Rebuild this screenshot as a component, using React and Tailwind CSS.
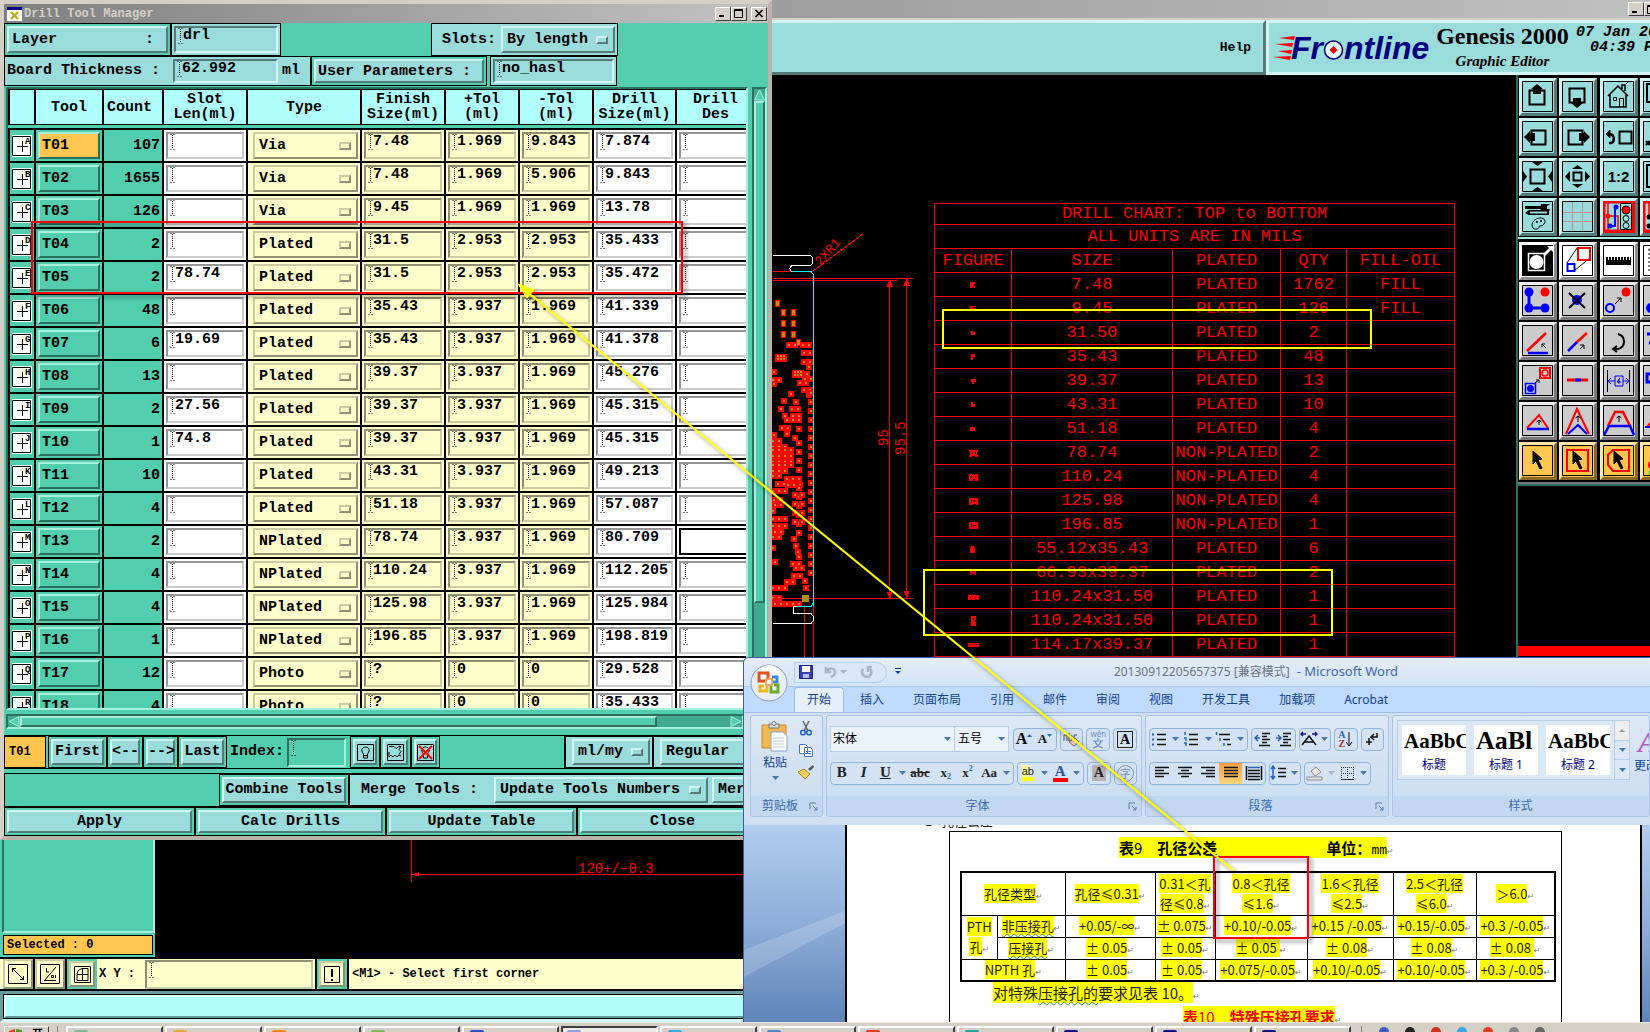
import React from 'react';

const MONO = "font-['Liberation_Mono',monospace] font-bold";
const SANS = "font-['Noto_Sans','Noto_Sans_CJK_SC',sans-serif]";

const greenUp = 'border-2 border-t-[#a8f0de] border-l-[#a8f0de] border-b-[#2d7060] border-r-[#2d7060]';
const greenDown = 'border-2 border-t-[#2d7060] border-l-[#2d7060] border-b-[#a8f0de] border-r-[#a8f0de]';
const aquaUp = 'border-2 border-t-[#d3f4f4] border-l-[#d3f4f4] border-b-[#557a7a] border-r-[#557a7a] bg-[#9adbdb]';
const aquaDown = 'border-2 border-t-[#557a7a] border-l-[#557a7a] border-b-[#d3f4f4] border-r-[#d3f4f4]';
const creamUp = 'border-2 border-t-[#ccccA2] border-l-[#ccccA2] border-b-[#8f8f72] border-r-[#8f8f72] bg-[#ffffcb]';
const creamDown = 'border-2 border-t-[#8f8f72] border-l-[#8f8f72] border-b-[#ccccA2] border-r-[#ccccA2] bg-[#ffffcb]';
const whiteDown = 'border-2 border-t-[#969696] border-l-[#969696] border-b-[#cbcbcb] border-r-[#cbcbcb] bg-white';

const tools = [
  ['T01', 107, '', 'Via', '7.48', '1.969', '9.843', '7.874'],
  ['T02', 1655, '', 'Via', '7.48', '1.969', '5.906', '9.843'],
  ['T03', 126, '', 'Via', '9.45', '1.969', '1.969', '13.78'],
  ['T04', 2, '', 'Plated', '31.5', '2.953', '2.953', '35.433'],
  ['T05', 2, '78.74', 'Plated', '31.5', '2.953', '2.953', '35.472'],
  ['T06', 48, '', 'Plated', '35.43', '3.937', '1.969', '41.339'],
  ['T07', 6, '19.69', 'Plated', '35.43', '3.937', '1.969', '41.378'],
  ['T08', 13, '', 'Plated', '39.37', '3.937', '1.969', '45.276'],
  ['T09', 2, '27.56', 'Plated', '39.37', '3.937', '1.969', '45.315'],
  ['T10', 1, '74.8', 'Plated', '39.37', '3.937', '1.969', '45.315'],
  ['T11', 10, '', 'Plated', '43.31', '3.937', '1.969', '49.213'],
  ['T12', 4, '', 'Plated', '51.18', '3.937', '1.969', '57.087'],
  ['T13', 2, '', 'NPlated', '78.74', '3.937', '1.969', '80.709'],
  ['T14', 4, '', 'NPlated', '110.24', '3.937', '1.969', '112.205'],
  ['T15', 4, '', 'NPlated', '125.98', '3.937', '1.969', '125.984'],
  ['T16', 1, '', 'NPlated', '196.85', '3.937', '1.969', '198.819'],
  ['T17', 12, '', 'Photo', '?', '0', '0', '29.528'],
  ['T18', 4, '', 'Photo', '?', '0', '0', '35.433'],
];

const chart = [
  ['7.48', 'PLATED', '1762', 'FILL'],
  ['9.45', 'PLATED', '126', 'FILL'],
  ['31.50', 'PLATED', '2', ''],
  ['35.43', 'PLATED', '48', ''],
  ['39.37', 'PLATED', '13', ''],
  ['43.31', 'PLATED', '10', ''],
  ['51.18', 'PLATED', '4', ''],
  ['78.74', 'NON-PLATED', '2', ''],
  ['110.24', 'NON-PLATED', '4', ''],
  ['125.98', 'NON-PLATED', '4', ''],
  ['196.85', 'NON-PLATED', '1', ''],
  ['55.12x35.43', 'PLATED', '6', ''],
  ['66.93x39.37', 'PLATED', '2', ''],
  ['110.24x31.50', 'PLATED', '1', ''],
  ['110.24x31.50', 'PLATED', '1', ''],
  ['114.17x39.37', 'PLATED', '1', ''],
];

// one small mark per chart row
const marks = [
  'M0 0h5v2h-1v2h1v2h-2v-1h-1v1h-2z',
  'M0 0h6v1h-3v1h3v2h-2v-1h-4z',
  'M1 1h2v1h2v3h-4z',
  'M1 0h4v3h-2v3h-2z',
  'M1 1h5v3h-2v2h-2v-2h-1z',
  'M1 0h2v2h2v3h-4z',
  'M0 1h5v4h-5z',
  'M-1 0h9v2h-1v3h1v2h-3v-1h-3v1h-3v-2h1v-3h-1zM2 2v2h1v-2zM5 2v2h1v-2z',
  'M-1 0h3v1h1v-1h1v1h1v-1h3v7h-3v-2h-2v2h-4zM1 2v2h1v-2zM5 2v2h1v-2z',
  'M-1 0h9v7h-2v-1h-3v1h-4zM1 2v3h1v-3zM4 2v2h1v-2z',
  'M-1 0h9v7h-9zM1 1v4h1v-4zM3 3v1h3v-1z',
  'M1 0h3v1h1v6h-5v-6h1z',
  'M0 1h6v4h-2v-1h-2v1h-2z',
  'M-2 1h11v5h-2v-1h-2v1h-3v-1h-1v1h-3zM0 3v1h1v-1zM5 3v1h1v-1z',
  'M1-2h5v4h-1v2h1v4h-5zM3 0v2h1v-2z',
  'M-2 1h11v4h-11zM0 2v1h1v-1zM3 2v1h1v-1zM6 2v1h1v-1z',
];

function Caret() {
  return (
    <svg width="5" height="16" className="ml-[2px] shrink-0" aria-hidden="true">
      <path d="M0.5 .5h1M3.5 .5h1M.5 15.5h1M3.5 15.5h1" stroke="#000" />
      <path d="M2.5 1v14" stroke="#000" strokeDasharray="1 1" />
    </svg>
  );
}

function Field({ label, value = '', look, className = '' }) {
  return (
    <div className={`flex min-w-0 items-start ${look} ${className}`}>
      <Caret />
      <input
        aria-label={label}
        defaultValue={value}
        className="h-4 w-full min-w-0 bg-transparent leading-4 outline-none"
      />
    </div>
  );
}

function Pick({ label, options, look, tone, className = '' }) {
  return (
    <div className={`flex min-w-0 items-center ${look} ${className}`}>
      <select aria-label={label} className="min-w-0 flex-1 appearance-none bg-transparent pl-1 outline-none">
        {options.map((o) => <option key={o}>{o}</option>)}
      </select>
      <span className={`mr-[5px] h-2 w-3 shrink-0 border-2 ${tone}`} />
    </div>
  );
}

const aquaKnob = 'border-t-[#d3f4f4] border-l-[#d3f4f4] border-b-[#557a7a] border-r-[#557a7a]';
const creamKnob = 'border-t-[#ccccA2] border-l-[#ccccA2] border-b-[#8f8f72] border-r-[#8f8f72]';

function WinButton({ kind }) {
  return (
    <button aria-label={kind} className="flex h-[14px] w-4 items-center justify-center border border-t-white border-l-white border-b-[#404040] border-r-[#404040] bg-[#d4d0c8]">
      <svg width="10" height="9" fill="none" stroke="#000">
        {kind === 'minimize' && <path d="M1 7h5" strokeWidth="2" />}
        {kind === 'maximize' && <path d="M.5 .5h8v8h-8zM.5 1.5h8" />}
        {kind === 'close' && <path d="M1.5 1l7 7M8.5 1l-7 7" strokeWidth="1.6" />}
      </svg>
    </button>
  );
}

/* ---------- Drill Tool Manager ---------- */

function ToolTable() {
  const th = 'border-y border-l-2 border-black bg-[#b0ffff] p-0 font-bold leading-[15px]';
  const td = 'h-[33px] border-t-2 border-l-2 border-black p-[2px]';
  return (
    <table className="w-full table-fixed border-separate border-spacing-0">
      <colgroup>
        <col className="w-[26px]" />
        <col className="w-[68px]" />
        <col className="w-[60px]" />
        <col className="w-[84px]" />
        <col className="w-[114px]" />
        <col className="w-[84px]" />
        <col className="w-[74px]" />
        <col className="w-[74px]" />
        <col className="w-[83px]" />
        <col />
      </colgroup>
      <thead>
        <tr className="h-9">
          <th className={th} aria-label="Shape" />
          <th className={th}>Tool</th>
          <th className={`${th} pl-[3px] text-left`}>Count</th>
          <th className={th}>Slot<br />Len(ml)</th>
          <th className={th}>Type</th>
          <th className={th}>Finish<br />Size(ml)</th>
          <th className={th}>+Tol<br />(ml)</th>
          <th className={th}>-Tol<br />(ml)</th>
          <th className={th}>Drill<br />Size(ml)</th>
          <th className={`${th} pl-2`}>Drill<br />Des</th>
        </tr>
      </thead>
      <tbody>
        <tr className="h-[3px]"><td colSpan={10} className="p-0" /></tr>
        {tools.map(([id, count, slot, type, size, plus, minus, drill], i) => (
          <tr key={id}>
            <td className={`${td} pr-0`}>
              <svg width="20" height="22" viewBox="0 0 20 22">
                <path d="M0 0h20v22H0z" fill="#fff" />
                <path d="M.5 1.500h18v19H.5zM5 11.500h11M10.500 6v11" fill="none" stroke="#000" />
                <text x="13" y="9" fontSize="9" fill="#000">{'ABCDEFGHIJKLMNOPQR'[i]}</text>
              </svg>
            </td>
            <td className={td}>
              <button className={`block h-[27px] w-full pl-[2px] text-left ${greenUp} ${i === 0 ? 'bg-[#ffc64f]' : 'bg-[#52cdae]'}`}>{id}</button>
            </td>
            <td className={`${td} text-right`}>{count}</td>
            <td className={`${td} bg-white`}><Field label={`${id} slot length`} value={slot} look={whiteDown} className="h-[27px]" /></td>
            <td className={`${td} bg-[#ffffcb] pl-[5px]`}>
              <Pick label={`${id} type`} options={[type]} look={creamUp} tone={creamKnob} className="h-[27px]" />
            </td>
            <td className={`${td} bg-[#ffffcb]`}><Field label={`${id} finish size`} value={size} look={creamDown} className="h-[27px]" /></td>
            <td className={`${td} bg-[#ffffcb]`}><Field label={`${id} plus tolerance`} value={plus} look={creamDown} className="h-[27px]" /></td>
            <td className={`${td} bg-[#ffffcb]`}><Field label={`${id} minus tolerance`} value={minus} look={creamDown} className="h-[27px]" /></td>
            <td className={`${td} bg-white`}><Field label={`${id} drill size`} value={drill} look={whiteDown} className="h-[27px]" /></td>
            <td className={`${td} bg-white pr-0`}>
              {id === 'T13' ? (
                <div className="h-[27px] border-2 border-r-0 border-black bg-white" />
              ) : (
                <Field label={`${id} designator`} look={whiteDown} className="h-[27px] border-r-0" />
              )}
            </td>
          </tr>
        ))}
      </tbody>
    </table>
  );
}

function DrillToolManager() {
  const box = 'border border-black p-[2px]';
  const btn = `h-full w-full ${aquaUp}`;
  return (
    <section className={`absolute left-0 top-0 flex w-[772px] flex-col border-4 border-t-[#d4d0c8] border-l-[#d4d0c8] border-r-[#b8b4ac] border-b-[#b8b4ac] bg-[#52cdae] text-[15px] leading-5 ${MONO}`}>
      <header className="flex h-[19px] items-center bg-linear-to-r from-[#808080] to-[#c3c3c3] pl-[3px] text-xs text-[#d4d0c8]">
        <svg width="15" height="14" className="mr-[2px]">
          <path d="M0 0h15v14H0z" fill="#fff" />
          <path d="M0 0h15v3H0z" fill="#000080" />
          <path d="M4 5l7 7M11 5l-7 7" stroke="#b9ae18" strokeWidth="2.4" />
        </svg>
        <h1 className="flex-1">Drill Tool Manager</h1>
        <WinButton kind="minimize" />
        <WinButton kind="maximize" />
        <span className="w-1" />
        <WinButton kind="close" />
        <span className="w-px" />
      </header>

      <div className="flex h-[33px]">
        <div className={`${box} w-[167px]`}>
          <button className={`${btn} flex items-center justify-between pl-[3px] pr-3`}><span>Layer</span><span>:</span></button>
        </div>
        <div className={`${box} w-[110px] bg-[#9adbdb]`}><Field label="Layer" value="drl" look={aquaDown} className="h-full" /></div>
        <div className={`${box} ml-[150px] flex w-[187px] items-center bg-[#9adbdb]`}>
          <span className="flex-1 pl-2">Slots:</span>
          <Pick label="Slots" options={['By length']} look={aquaUp} tone={aquaKnob} className="h-full w-[114px]" />
        </div>
      </div>
      <div className="flex h-[30px]">
        <div className={`${box} flex w-[307px] items-center bg-[#9adbdb]`}>
          <span className="w-[166px] shrink-0">Board Thickness :</span>
          <Field label="Board thickness" value="62.992" look={aquaDown} className="h-6 w-[105px]" />
          <span className="pl-1">ml</span>
        </div>
        <div className={`${box} w-[176px]`}><button className={`${btn} pl-[2px] text-left leading-none`}>User Parameters :</button></div>
        <div className={`${box} ml-[3px] w-[127px] bg-[#9adbdb]`}><Field label="User parameters" value="no_hasl" look={aquaDown} className="h-full" /></div>
      </div>

      <div className="mt-px flex h-[623px]">
        <div className={`ml-[2px] min-w-0 flex-1 overflow-hidden ${greenDown}`}><ToolTable /></div>
        <div className={`ml-1 mr-px flex w-[15px] flex-col bg-[#40a98f] ${greenDown}`}>
          <svg width="11" height="12"><path d="M5.5 1L10.500 11H.5z" fill="#52cdae" stroke="#a8f0de" /></svg>
          <div className={`h-[502px] bg-[#52cdae] ${greenUp}`} />
        </div>
      </div>
      <div className="flex h-[22px] pt-1 pl-[2px] pr-6">
        <div className={`flex h-[15px] w-full bg-[#40a98f] ${greenDown}`}>
          <svg width="12" height="11"><path d="M1 5.500L11 .5v10z" fill="#52cdae" stroke="#a8f0de" /></svg>
          <div className={`h-full w-[637px] bg-[#52cdae] ${greenUp}`} />
          <span className="flex-1" />
          <svg width="12" height="11"><path d="M11 5.500L1 .5v10z" fill="#52cdae" stroke="#a8f0de" /></svg>
        </div>
      </div>

      <div className="mt-[3px] flex h-[34px] border-y border-black">
        <div className="mr-[2px] w-[42px] border border-black bg-[#ffc64f] pl-1 text-xs leading-[30px]">T01</div>
        <div className={`${box} w-[59px]`}><button className={btn}>First</button></div>
        <div className={`${box} w-9`}><button className={`${btn} whitespace-nowrap`}>&lt;--</button></div>
        <div className={`${box} w-[35px]`}><button className={`${btn} whitespace-nowrap`}>--&gt;</button></div>
        <div className={`${box} w-[49px]`}><button className={btn}>Last</button></div>
        <div className="flex w-[123px] items-center pl-[3px]">
          <label className="flex-1" htmlFor="tool-index">Index:</label>
          <div className={`mr-1 flex h-[29px] w-[59px] items-start ${greenDown}`}>
            <Caret />
            <input id="tool-index" className="h-4 w-full min-w-0 bg-transparent outline-none" />
          </div>
        </div>
        <div className={`${box} w-[30px]`}>
          <button aria-label="Highlight" className={`flex items-center justify-center ${btn}`}>
            <svg width="17" height="17" fill="none" stroke="#000" className="shrink-0"><path d="M.5 .5h16v16H.5z" /><path d="M6.500 10c-4-5 0-7 2-7s6 2 2 7v4h-4zM6.500 11.500h4" /></svg>
          </button>
        </div>
        <div className={`${box} w-[31px]`}>
          <button aria-label="Save" className={`flex items-center justify-center ${btn}`}>
            <svg width="17" height="17" fill="none" stroke="#000" className="shrink-0"><path d="M.5 .5h16v16H.5z" /><path d="M2 2.500h5l2 2 3-2h2l-2 3 2 2-2 3M2 8v5l2-2 2 2 2-2 2 2 2-2 2 1" /></svg>
          </button>
        </div>
        <div className={`${box} w-[29px]`}>
          <button aria-label="Clear" className={`flex items-center justify-center ${btn}`}>
            <svg width="17" height="17" fill="none" stroke="#000" className="shrink-0"><path d="M.5 .5h16v16H.5z" /><path d="M6.500 10c-4-5 0-7 2-7s6 2 2 7v4h-4z" /><path d="M2 2l13 13M15 2L2 15" stroke="#f00" strokeWidth="2" /></svg>
          </button>
        </div>
        <div className="flex-1 border-r border-black" />
        <div className={`${box} w-[88px] bg-[#9adbdb] pl-[6px]`}><Pick label="Units" options={['ml/my']} look={aquaUp} tone={aquaKnob} className="h-full" /></div>
        <div className={`${box} w-[115px] bg-[#9adbdb] pl-[6px]`}><Pick label="Mode" options={['Regular']} look={aquaUp} tone={aquaKnob} className="h-full" /></div>
      </div>

      <div className="mt-1 flex h-[34px] border-y border-black">
        <div className="w-[215px] border-l border-black" />
        <div className={`${box} w-[130px]`}><button className={`${btn} whitespace-nowrap`}>Combine Tools</button></div>
        <div className={`${box} flex min-w-0 flex-1 items-center bg-[#9adbdb] pr-0`}>
          <span className="w-[142px] shrink-0 pl-[9px]">Merge Tools :</span>
          <Pick label="Merge tools" options={['Update Tools Numbers']} look={aquaUp} tone={aquaKnob} className="h-full w-[214px] shrink-0" />
          <button className={`ml-1 h-full flex-1 overflow-hidden pl-1 text-left ${aquaUp}`}>Merge</button>
        </div>
      </div>
      <div className="grid h-[29px] grid-cols-4">
        {['Apply', 'Calc Drills', 'Update Table', 'Close'].map((t) => (
          <div key={t} className={box}><button className={`${btn} leading-none`}>{t}</button></div>
        ))}
      </div>
    </section>
  );
}

/* ---------- Graphic editor behind the dialogs ---------- */

const navIcons = [
  <g key="n"><path d="M7.500 9.500h15v14h-15z" fill="none" stroke="#000" strokeWidth="2" /><path d="M15 3l6 5h-2v5h-8V8H9z" /></g>,
  <g key="n"><path d="M7.500 7.500h15v14h-15z" fill="none" stroke="#000" strokeWidth="2" /><path d="M15 27l6-5h-2v-5h-8v5H9z" /></g>,
  <g key="n" fill="none" stroke="#000"><path d="M7 13v13h16V13M5 15L15 5l10 10M19 8V4h3v6" strokeWidth="1.500" /><path d="M10.500 16.500h3v3h-3zM16.500 26V17.500h4V26M23 3l2-2" /></g>,
  <path key="n" d="M4 3h24v18H4z" fill="none" stroke="#000" strokeWidth="2" />,
  <g key="n"><path d="M9.500 9.500h14v14h-14z" fill="none" stroke="#000" strokeWidth="2" /><path d="M2 16l6-6v2h5v8H8v2z" /></g>,
  <g key="n"><path d="M6.500 9.500h14v14h-14z" fill="none" stroke="#000" strokeWidth="2" /><path d="M28 16l-6-6v2h-5v8h5v2z" /></g>,
  <g key="n" fill="none" stroke="#000"><path d="M16.500 10.500h12v12h-12z" strokeWidth="2" /><path d="M6 22h2c4-1 4-9-2-9" strokeWidth="2.500" /><path d="M7 9l-4 4 4 4z" fill="#000" /></g>,
  <path key="n" d="M8 3v17h20M3 20l4 4M7 20l-4 4" fill="none" stroke="#000" strokeWidth="2" />,
  <g key="n"><path d="M8.500 8.500h14v14h-14z" fill="none" stroke="#000" strokeWidth="2" /><path d="M10 1h11l-5.500 4zM10 30h11l-5.500-4zM1 10v11l4-5.500zM30 10v11l-4-5.500z" /></g>,
  <g key="n"><path d="M11.500 11.500h8v8h-8z" fill="none" stroke="#000" strokeWidth="2" /><path d="M10 8h11l-5.500-4zM10 23h11l-5.500 4zM8 10v11l-5-5.500zM23 10v11l5-5.500z" /></g>,
  <text key="n" x="15.500" y="21" fontSize="15" textAnchor="middle" className="font-['Liberation_Sans',sans-serif] font-bold">1:2</text>,
  <path key="n" d="M4 4h24v22H4zM10 10h18" fill="none" stroke="#000" strokeWidth="2" />,
  <g key="n"><path d="M3 5h16v3H3zM19 3h9l-3 2v3h3l-1 2h-6l-3-2zM3 12l4-3h20v5H7z" /><path d="M8 11.500h17" stroke="#9adbdb" strokeWidth="2" /><path d="M11 27c-3-5 2-10 7-10s6 3 4 6-5 1-5 3-4 3-6 1z" fill="none" stroke="#000" /><circle cx="15" cy="21" r="1" /><circle cx="19" cy="20" r="1" /></g>,
  <path key="n" d="M10.500 1v29M20.500 1v29M1 11.500h29M1 20.500h29" fill="none" stroke="#c98c8c" />,
  <g key="n"><path d="M5 1v29M5 15h10v14" stroke="#f00" fill="none" strokeWidth="1.500" /><path d="M7 25h5V6" stroke="#00f" fill="none" strokeWidth="2" /><circle cx="5" cy="15" r="2.500" fill="#f00" /><circle cx="13" cy="6" r="2.500" fill="#00f" /><circle cx="7" cy="25" r="2.500" fill="#00f" /><path d="M17.500 2.500h11v26h-11z" fill="#9adbdb" stroke="#000" /><circle cx="23" cy="9" r="4" fill="#f00" stroke="#000" /><circle cx="23" cy="17.500" r="3" fill="none" stroke="#000" /><circle cx="23" cy="24.500" r="3" fill="none" stroke="#000" /></g>,
  <g key="n"><path d="M6 2v14l9-5" fill="none" stroke="#f00" strokeWidth="1.500" /><circle cx="6" cy="16" r="2.500" /><circle cx="6" cy="25" r="2.500" /></g>,
];

const editIcons = [
  <g key="e"><path d="M0 0h31v31H0z" /><path d="M6.500 8.500h16v17h-16z" fill="none" stroke="#fff" strokeWidth="1.500" /><circle cx="14.500" cy="17" r="7" fill="#fff" /><path d="M21 9l6-6-2-2h6v6l-2-2-6 6z" fill="#fff" /></g>,
  <g key="e" fill="none"><path d="M5 18L15 3M13 25l15-12" stroke="#000" /><path d="M16 3h12v12H16z" stroke="#f00" strokeWidth="2" /><path d="M5.500 19h7v7h-7z" stroke="#00f" strokeWidth="2" /></g>,
  <path key="e" d="M3 12h2v3h1v-3h2v3h1v-3h2v3h1v-3h2v3h1v-3h2v3h1v-3h2v3h1v-3h2v3h1v-3h2v3h1v-3h1v8H3z" />,
  <path key="e" d="M6 4h24M6 4v24" fill="none" stroke="#000" strokeDasharray="2 2" />,
  <g key="e"><path d="M7 7v16h17" fill="none" stroke="#00f" strokeWidth="3" /><circle cx="7" cy="7" r="4.500" fill="#00f" /><circle cx="7" cy="23" r="4.500" fill="#00f" /><circle cx="23" cy="23" r="4.500" fill="#00f" /><circle cx="23" cy="7" r="4.500" fill="#f00" /></g>,
  <g key="e"><circle cx="15" cy="15" r="5" fill="#00f" /><path d="M7 8l16 15M23 8L7 23" stroke="#000" strokeWidth="2" /></g>,
  <g key="e"><circle cx="7" cy="23" r="4" fill="none" stroke="#00f" strokeWidth="2" /><path d="M12 19l6-6M14 13h4v4" fill="none" stroke="#000" /><circle cx="23" cy="7" r="4.500" fill="#f00" /></g>,
  <circle key="e" cx="8" cy="23" r="5" fill="#00f" />,
  <g key="e" fill="none"><path d="M5 26L24 8" stroke="#f00" strokeWidth="2.500" /><path d="M6 28h20" stroke="#00f" strokeWidth="2.500" /><path d="M24 23l-4-4M20 22v-3h3" stroke="#000" /></g>,
  <g key="e" fill="none"><path d="M6 26L15 17" stroke="#00f" strokeWidth="2.500" /><path d="M15 17L25 8" stroke="#f00" strokeWidth="2.500" /><path d="M18 24l4-4M18 20h4v4" stroke="#000" /></g>,
  <path key="e" d="M15 9c8 2 8 13 0 15h-4M14 21l-4 3 4 3" fill="none" stroke="#000" strokeWidth="2" />,
  <path key="e" d="M4 9h24M6 18h24" fill="none" stroke="#00f" strokeWidth="3" />,
  <g key="e" fill="none"><path d="M18 3h10v10H18z" stroke="#f00" strokeWidth="2" /><circle cx="23" cy="8" r="3" stroke="#f00" strokeWidth="1.500" /><path d="M3.500 18.500h10v10h-10z" stroke="#00f" strokeWidth="1.500" /><circle cx="8.500" cy="23.500" r="3.500" fill="#00f" /><path d="M13 18l4-3M14 15h3v3" stroke="#000" /></g>,
  <g key="e"><path d="M5 15h21" stroke="#f00" strokeWidth="3" /><path d="M13 15h6" stroke="#00f" strokeWidth="3" /></g>,
  <g key="e" fill="none" stroke="#00f"><path d="M4.500 5v22M26.500 5v22" stroke="#000" /><path d="M12 11h8v10h-8zM5 16h7M20 16h6M8 13l-3 3 3 3M23 13l3 3-3 3M17 13l-3 4h4M16 14v5" /></g>,
  <path key="e" d="M4 9h10v8H4zM10 18v8h12" fill="none" stroke="#00f" strokeWidth="3" />,
  <g key="e" fill="none"><path d="M5 23L17 10l9 13" stroke="#f00" strokeWidth="2" /><path d="M5 24h22" stroke="#00f" strokeWidth="2.500" /><path d="M17 20v-5M14.500 17l2.500-2 2.500 2" stroke="#000" /></g>,
  <g key="e" fill="none"><path d="M4 29L15 4l12 25" stroke="#f00" strokeWidth="2" /><path d="M6 29l10-9 9 9" stroke="#00f" strokeWidth="2" /><path d="M16 17v-6M13.500 13l2.500-2 2.500 2" stroke="#000" /></g>,
  <g key="e" fill="none"><path d="M5 21l7-14h8l7 14" stroke="#f00" strokeWidth="2.500" /><path d="M1 30l5-9h21l4 9" stroke="#00f" strokeWidth="2.500" /><path d="M16 17v-6M13.500 13l2.500-2 2.500 2" stroke="#000" /></g>,
  <g key="e" fill="none"><path d="M4 22L18 6" stroke="#f00" strokeWidth="2" /><path d="M2 22h26" stroke="#00f" strokeWidth="2" /></g>,
];

const cursor = <path d="M11 6l9 8-4 1 4 8-2 1-4-8-3 3z" stroke="#000" />;
const selectIcons = [
  <g key="s">{cursor}</g>,
  <g key="s"><path d="M5 5h21v21H5z" fill="none" stroke="#f00" strokeWidth="2" />{cursor}</g>,
  <g key="s"><path d="M10 5h16v21H10l-5-6V10z" fill="none" stroke="#f00" strokeWidth="2" />{cursor}</g>,
  <g key="s"><circle cx="9" cy="20" r="4" fill="#f00" /><circle cx="9" cy="28" r="3" fill="#0c0" /><path d="M9 2v14" stroke="#000" /></g>,
];

function ToolButton({ icon, label, look, frame = '#000' }) {
  return (
    <button aria-label={label} className={`h-[38px] w-[38px] border-[3px] ${look}`}>
      <svg width="32" height="32" viewBox="0 0 32 32">
        <path d="M.5 .5h30v30H.5z" fill="none" stroke={frame} strokeWidth={frame === '#000' ? 1 : 4} />
        {icon}
      </svg>
    </button>
  );
}

function Palette() {
  const aqua = 'border-t-[#d3f4f4] border-l-[#d3f4f4] border-b-[#557a7a] border-r-[#557a7a] bg-[#9adbdb]';
  const white = 'border-t-white border-l-white border-b-[#8c8c8c] border-r-[#8c8c8c] bg-white';
  const grey = 'border-t-[#eeeeee] border-l-[#eeeeee] border-b-[#7a7a7a] border-r-[#7a7a7a] bg-[#cbcbcb]';
  const gold = 'border-t-[#ffe6ac] border-l-[#ffe6ac] border-b-[#8a6824] border-r-[#8a6824] bg-[#ffc64f]';
  return (
    <nav className="relative w-[134px] shrink-0 overflow-hidden border-l-2 border-[#2d7060] bg-black">
      <div className="grid w-40 grid-cols-4 gap-[2px] pt-[3px] pl-px">
        {navIcons.map((icon, i) => (
          <ToolButton key={i} icon={icon} label={`View ${i + 1}`} look={aqua} frame={i > 13 ? '#f00' : '#000'} />
        ))}
      </div>
      <div className="mt-px mb-[3px] h-[2px] bg-[#a8f0de]" />
      <div className="grid w-40 grid-cols-4 gap-[2px] pl-px">
        {editIcons.map((icon, i) => (
          <ToolButton key={i} icon={icon} label={`Edit ${i + 1}`} look={i < 4 ? white : grey} />
        ))}
        {selectIcons.map((icon, i) => (
          <ToolButton key={i} icon={icon} label={`Select ${i + 1}`} look={gold} />
        ))}
      </div>
      <div className="mt-[2px] h-[2px] bg-[#777777]" />
      <div className="h-[2px] bg-[#2d7060]" />
      <div className="mt-[160px] h-[10px] bg-[#f00]" />
    </nav>
  );
}

// pad rows of the board edge: [y, fromX, toX]
const padRows = [
  [346, 789, 797], [346, 803, 812], [352, 804, 810], [363, 804, 810], [368, 809, 811], [373, 807, 811],
  [379, 805, 811], [384, 800, 811], [389, 804, 810], [394, 809, 811], [372, 774, 777], [380, 773, 780], [385, 774, 777],
  [395, 791, 794], [402, 784, 788], [402, 796, 799], [408, 781, 783], [408, 792, 800], [415, 785, 788], [415, 793, 800],
  [421, 787, 800], [427, 782, 788], [433, 787, 790], [430, 799, 802], [436, 774, 776], [438, 795, 797],
  [441, 773, 783], [446, 773, 786], [451, 773, 792], [456, 773, 792], [461, 773, 792], [466, 773, 792],
  [471, 773, 790], [479, 787, 804], [486, 788, 804], [476, 773, 784], [484, 778, 784], [492, 773, 786], [499, 774, 780],
  [505, 775, 782], [512, 773, 778], [519, 773, 788], [525, 773, 786], [531, 775, 785], [537, 773, 780],
  [538, 794, 796], [545, 796, 800], [551, 798, 802], [557, 799, 802], [563, 793, 800], [569, 796, 802], [575, 794, 800],
  [581, 787, 794], [582, 805, 808], [587, 773, 786], [589, 806, 810], [598, 773, 784], [604, 775, 800],
  [561, 775, 777], [548, 773, 775],
];

function Board() {
  const pads = [];
  padRows.forEach(([y, from, to], r) => {
    for (let x = from; x <= to; x += 6) pads.push([x, y + ((x + r) % 3) - 1]);
  });
  for (let y = 393; y < 580; y += 9) pads.push([811, y]);
  for (let y = 443; y < 540; y += 9) pads.push([799, y]);
  for (let y = 495; y < 530; y += 9) pads.push([795, y], [802, y]);
  return (
    <svg className="absolute left-0 top-0 h-full w-full" shapeRendering="crispEdges">
      <g transform="translate(-155 -75)">
        {pads.map(([x, y], i) => (
          <g key={i}>
            <path d={`M${x - 3} ${y - 3}h6v6h-6z`} fill="#f00" />
            <path d={`M${x - 1} ${y - 1}h2v2h-2z`} fill="#c08a10" />
          </g>
        ))}
        {[[777, 303], [783, 312], [793, 312], [783, 323], [793, 323], [783, 334], [793, 334], [798, 342]].map(([x, y]) => (
          <path key={`${x}-${y}`} d={`M${x - 2} ${y - 3}h4v6h-4z`} fill="#c08a10" stroke="#f00" />
        ))}
        <path d="M775 354h11v7h-11zM792 370h11v7h-11z" fill="#f00" stroke="#f00" />
        <path d="M777 356h8M777 359h8M794 372h8M794 375h8" stroke="#c08a10" strokeWidth="2" strokeDasharray="2 1" />
        <path d="M773 271.500h25M773 278.500h140M773 280.500h124M773 598.500h140M804.500 605v52M813.500 605v52" stroke="#f00" fill="none" />
        <path d="M889.500 280v318M906.500 278v320M813 271l50-37" stroke="#f00" fill="none" />
        <path d="M887 286h5l-2-6zM904 285h5l-2-6zM887 592h5l-2 6zM904 591h5l-2 6z" fill="#f00" stroke="#f00" />
        <path d="M773 255.500h37q3 1 3 5t-3 5h-16q-4 0-4 3t3 3" stroke="#fff" fill="none" />
        <path d="M792 271.500h19l2.500 3v331M794 606.500h17l2-3" stroke="#0ff" fill="none" />
        <path d="M797 606.500h-4v7h18l2.500 3v4l-2.500 3h-38" stroke="#fff" fill="none" />
        <path d="M802 595h6v6h-6z" fill="#9a9a10" stroke="#c08a10" />
        <g fill="#f00" fontSize="14" className="font-['Liberation_Mono',monospace]">
          <text transform="translate(888 446) rotate(-90)">95</text>
          <text transform="translate(905 455) rotate(-90)">95.5</text>
          <text transform="translate(820 266) rotate(-48)" fontSize="13">2XR1</text>
          <text x="578" y="873">120+/-0.3</text>
        </g>
        <path d="M411.500 839v43M411 874.500h362" stroke="#f00" fill="none" />
        <path d="M411 875l8-3v4z" fill="#f00" />
      </g>
    </svg>
  );
}

function DrillChart() {
  const cell = 'h-6 border border-[#f00] p-0 font-normal';
  return (
    <table className="absolute left-[779px] top-[128px] w-[520px] table-fixed border-collapse text-center font-['Liberation_Mono',monospace] text-[17px] leading-[22px] text-[#f00]">
      <colgroup>
        <col className="w-[77px]" />
        <col className="w-[161px]" />
        <col className="w-[108px]" />
        <col className="w-[66px]" />
        <col className="w-[108px]" />
      </colgroup>
      <thead>
        <tr><th colSpan={5} className="h-[21px] border border-[#f00] p-0 font-normal leading-5">DRILL CHART: TOP to BOTTOM</th></tr>
        <tr><th colSpan={5} className={cell}>ALL UNITS ARE IN MILS</th></tr>
        <tr>
          {['FIGURE', 'SIZE', 'PLATED', 'QTY', 'FILL-OIL'].map((h) => <th key={h} className={cell}>{h}</th>)}
        </tr>
      </thead>
      <tbody>
        {chart.map(([size, plated, qty, fill], i) => (
          <tr key={i}>
            <td className={cell}>
              <svg width="12" height="10" viewBox="-3 -2 12 10" className="mx-auto" shapeRendering="crispEdges"><path d={marks[i]} fill="#f00" fillRule="evenodd" /></svg>
            </td>
            <td className={cell}>{size}</td>
            <td className={cell}>{plated}</td>
            <td className={cell}>{qty}</td>
            <td className={cell}>{fill}</td>
          </tr>
        ))}
      </tbody>
    </table>
  );
}

function EditorHeader() {
  const bevel = 'border-[3px] border-t-[#d3f4f4] border-l-[#d3f4f4] border-b-[#557a7a] border-r-[#557a7a] bg-[#9adbdb]';
  return (
    <>
      <div className="flex h-5 shrink-0 items-center justify-end border-b-2 border-[#d4d0c8] bg-linear-to-r from-[#808080] to-[#c0c0c0]">
        <WinButton kind="minimize" />
        <div className="w-[6px] overflow-hidden"><WinButton kind="maximize" /></div>
      </div>
      <div className="flex h-[55px] shrink-0 text-black">
        <div className={`flex flex-1 items-center justify-end pr-3 ${bevel}`}>
          <button className={`text-[13px] ${MONO}`}>Help</button>
        </div>
        <div className={`flex w-[384px] shrink-0 overflow-hidden ${bevel} border-t-[#557a7a] border-b-[#d3f4f4] border-r-0`}>
          <div className="flex h-[50px] w-[165px] shrink-0 items-center pl-1 font-['Liberation_Sans',sans-serif] text-[32px] font-bold italic leading-9 text-[#000080]">
            <svg width="22" height="24" className="-mr-1 shrink-0">
              <path d="M6 2l16-2-1 4zM2 8l18-1-1 4zM5 15l14-1-1 4zM0 21l18-1-1 4z" fill="#f00" />
            </svg>
            <span>Fr</span>
            <svg width="21" height="22" className="mt-1 shrink-0">
              <circle cx="10.500" cy="11" r="9" fill="#e8ffff" stroke="#000080" strokeWidth="1.500" />
              <path d="M10.500 7l4 4-4 4-4-4z" fill="#f00" />
            </svg>
            <span>ntline</span>
          </div>
          <div className="w-[137px] shrink-0 text-center font-['Liberation_Serif',serif] font-bold">
            <div className="h-[26px] whitespace-nowrap text-2xl leading-[26px]">Genesis 2000</div>
            <div className="text-[15px] italic leading-6">Graphic Editor</div>
          </div>
          <div className={`shrink-0 whitespace-nowrap pt-[2px] pl-[5px] text-[15px] italic leading-[15px] ${MONO}`}>
            <div>07 Jan 2013</div>
            <div className="pl-[14px]">04:39 PM</div>
          </div>
        </div>
      </div>
    </>
  );
}

function StatusBars() {
  const icon = 'flex h-[30px] w-[30px] shrink-0 items-center justify-center';
  return (
    <div className={`shrink-0 text-xs ${MONO}`}>
      <div className="flex h-[34px] items-center border-y-2 border-black bg-[#ffffcb] pl-[3px]">
        <button aria-label="Snap" className={`${icon} ${creamUp}`}>
          <svg width="20" height="20" fill="none" stroke="#000"><path d="M.5 .5h19v19H.5zM4.500 4.500l11 11M4.500 8V4.500H8M15.500 12v3.500H12" /></svg>
        </button>
        <span className="h-full w-[2px] bg-black" />
        <button aria-label="Angle" className={`${icon} ${creamUp}`}>
          <svg width="20" height="20" fill="none" stroke="#000"><path d="M.5 .5h19v19H.5zM4 17L16 3M4 16.500h12M6.500 4v4H9" /><path d="M11.500 11.500h2v2h-2zM15.500 11v3" /></svg>
        </button>
        <span className="h-full w-[2px] bg-black" />
        <div className="h-full w-[30px] bg-[#52cdae] p-[2px]">
          <button aria-label="Grid" className={`flex h-full w-full items-center justify-center ${creamUp}`}>
            <svg width="17" height="17" fill="none" stroke="#000" className="shrink-0"><path d="M.5 .5h16v16H.5zM4 4.500l4-2h6v12H3v-6zM8.500 2v12M3 8.500h11" /></svg>
          </button>
        </div>
        <label htmlFor="xy" className="w-[48px] shrink-0 pl-[2px]">X Y :</label>
        <div className={`flex h-[29px] w-[168px] items-start ${creamDown}`}>
          <Caret />
          <input id="xy" className="min-w-0 flex-1 bg-transparent outline-none" />
        </div>
        <span className="ml-[2px] h-full w-[2px] bg-black" />
        <div className="h-full w-[30px] bg-[#52cdae] p-[2px]">
          <button aria-label="Alert" className={`flex h-full w-full items-center justify-center ${creamUp}`}>
            <svg width="16" height="17" fill="none" stroke="#000" className="shrink-0"><path d="M.5 .5h15v16H.5z" /><path d="M8 3v8M8 13v2" strokeWidth="2" /></svg>
          </button>
        </div>
        <span className="mr-[3px] h-full w-[2px] bg-black" />
        <span>&lt;M1&gt; - Select first corner</span>
      </div>
      <div className="h-[31px] border-[3px] border-t-[#6b9c9c] border-l-[#6b9c9c] border-b-[#d3f4f4] border-r-[#d3f4f4] bg-black p-px">
        <div className="h-full border-2 border-t-[#dcffff] border-l-[#dcffff] border-b-[#5d9a9a] border-r-[#5d9a9a] bg-[#b0ffff]" />
      </div>
    </div>
  );
}

/* ---------- Word window ---------- */

function Down({ dim }) {
  return <svg width="7" height="4" className="mx-[3px] shrink-0"><path d="M0 0h7L3.500 4z" fill={dim ? '#a9b4c2' : '#4a76b0'} /></svg>;
}

function Set({ children, className = '' }) {
  return <div className={`flex h-[23px] items-center rounded-sm border border-[#92b4dc] bg-[#d3e2f4] ${className}`}>{children}</div>;
}

function Rb({ label, children, className = '' }) {
  return <button aria-label={label} className={`flex h-full flex-1 items-center justify-center ${className}`}>{children}</button>;
}

function Lines({ d, children }) {
  return <svg width="18" height="16" fill="none" stroke="#111" strokeWidth="1.500"><path d={d} />{children}</svg>;
}

function Group({ title, children, className = '', corner = true }) {
  return (
    <section className={`flex shrink-0 flex-col overflow-hidden rounded-[3px] border border-[#a9c4e4] bg-linear-to-b from-[#dde8f5] to-[#c8dcf1] ${className}`}>
      <div className="min-h-0 flex-1">{children}</div>
      <h2 className="flex h-[20px] items-center bg-[#c1d8f0] text-xs text-[#3e6aaa]">
        <span className="flex-1 text-center">{title}</span>
        {corner && <svg width="9" height="9" className="mr-1" fill="none" stroke="#5b7fae"><path d="M1 7V1h6M4 4l4 4M8 5v3H5" /></svg>}
      </h2>
    </section>
  );
}

const serifB = "font-['Liberation_Serif',serif] font-bold";

function Ribbon() {
  const topRow = 'flex h-11 items-center gap-[3px] pt-[2px] pl-[3px] pr-1';
  return (
    <div className="flex h-[112px] gap-[3px] overflow-hidden bg-[#cfe0f3] pt-[2px] pb-2 pl-[6px]">
      <Group title="剪贴板" className="w-[73px]">
        <div className="flex pt-[5px] pl-[10px]">
          <button className="flex w-7 flex-col items-center text-xs text-[#15428b]">
            <svg width="28" height="31">
              <path d="M1 4h24v23H1z" fill="#f0b850" stroke="#c98a2b" />
              <path d="M8 3h10v4H8z" fill="#ddd" stroke="#777" /><circle cx="13" cy="2.500" r="2" fill="#eee" stroke="#777" />
              <path d="M10 11h12l4 4v15H10z" fill="#fff" stroke="#8aa6cc" />
              <path d="M12 17h11M12 20h11M12 23h11M12 26h11" stroke="#b8c8de" />
            </svg>
            <span className="whitespace-nowrap pt-[2px] leading-[18px]">粘贴</span>
            <span className="pt-1"><Down /></span>
          </button>
          <div className="ml-[9px] flex flex-col gap-[7px]">
            <button aria-label="剪切"><svg width="16" height="15" fill="none"><path d="M5 0l5 10M11 0L6 10" stroke="#666" strokeWidth="1.500" /><circle cx="5" cy="11.500" r="2.300" stroke="#2c62b8" strokeWidth="1.600" /><circle cx="11" cy="11.500" r="2.300" stroke="#2c62b8" strokeWidth="1.600" /></svg></button>
            <button aria-label="复制"><svg width="16" height="15" fill="#fff" stroke="#4a76b8"><path d="M1.500 1.500h6l2 2v7h-8zM6.500 4.500h6l2 2v7h-8z" /><path d="M8 8.500h5M8 10.500h5" /></svg></button>
            <button aria-label="格式刷"><svg width="16" height="15"><path d="M10 4l5-4 1 2-4 4z" fill="#555" /><path d="M6 4l6 5-5 5-7-7z" fill="#efcb5a" stroke="#a98522" /></svg></button>
          </div>
        </div>
      </Group>

      <Group title="字体" className="w-[316px]">
        <div className={topRow}>
          <div className="mr-px flex h-[26px] w-[180px] border border-[#b9cfe9] bg-[#eaf2fb] text-xs text-black">
            <select aria-label="字体" className="w-[110px] appearance-none pl-[2px] outline-none"><option>宋体</option></select>
            <span className="flex items-center"><Down /></span>
            <select aria-label="字号" className="min-w-0 flex-1 appearance-none border-l border-[#b9cfe9] pl-[3px] outline-none"><option>五号</option></select>
            <span className="flex items-center"><Down /></span>
          </div>
          <Set className="w-[44px] shrink-0">
            <Rb label="增大字体"><span className={`text-base ${serifB}`}>A</span><svg width="5" height="10"><path d="M0 3h5L2.500 0z" fill="#2c62b8" /></svg></Rb>
            <Rb label="缩小字体"><span className={`text-[13px] ${serifB}`}>A</span><svg width="5" height="10"><path d="M0 0h5L2.500 3z" fill="#2c62b8" /></svg></Rb>
          </Set>
          <Set className="w-6"><Rb label="清除格式"><svg width="18" height="16"><path d="M2 10V4h3v6M7 2v8h3V5H7M15 4h-3v5h3" fill="none" stroke="#555" /><path d="M7 11l6-4 4 4-5 4z" fill="#f3d6e0" stroke="#777" /></svg></Rb></Set>
          <Set className="w-6">
            <Rb label="拼音指南" className="flex-col text-[#6f8fb8]">
              <span className="h-2 text-[8px] leading-[8px]">wén</span>
              <svg width="12" height="11" fill="none" stroke="#6f8fb8" strokeWidth="1.200"><path d="M6 0v2M1 3h10M3 3c1 4 4 6 8 7M9 3C8 7 5 9 1 10" /></svg>
            </Rb>
          </Set>
          <Set className="w-6"><Rb label="字符边框"><span className={`h-[17px] w-4 border border-[#222] text-[14px] leading-4 ${serifB}`}>A</span></Rb></Set>
        </div>
        <div className="flex h-[26px] items-center gap-[3px] pl-[3px] pr-1 text-[#222]">
          <Set className={`w-[184px] shrink-0 text-[13px] ${serifB}`}>
            <Rb label="加粗" className="text-[15px]">B</Rb>
            <Rb label="倾斜" className="text-[15px]"><i>I</i></Rb>
            <Rb label="下划线" className="text-[15px]"><u>U</u></Rb><Down />
            <Rb label="删除线"><s>abc</s></Rb>
            <Rb label="下标" className="pl-1">x<span className="pt-2 text-[8px] text-[#2c62b8]">2</span></Rb>
            <Rb label="上标">x<span className="pb-2 text-[8px] text-[#2c62b8]">2</span></Rb>
            <Rb label="更改大小写">Aa</Rb><Down />
          </Set>
          <Set className="w-[67px] shrink-0">
            <Rb label="突出显示"><span className="border-b-4 border-[#ff0] bg-linear-to-r from-[#ff6] to-[#d3e2f4] font-['Liberation_Sans',sans-serif] text-[11px] leading-3">ab</span></Rb><Down />
            <Rb label="字体颜色"><span className={`border-b-4 border-[#f00] px-[2px] text-[15px] leading-[13px] text-[#2c52a0] ${serifB}`}>A</span></Rb><Down />
          </Set>
          <Set className="w-6"><Rb label="字符底纹"><span className={`w-[14px] bg-[#b4b4b4] text-[14px] leading-4 ${serifB}`}>A</span></Rb></Set>
          <Set className="w-6"><Rb label="带圈字符"><span className="h-[17px] w-[17px] rounded-full border border-[#7a90b0] text-[11px] leading-[15px] text-[#7a90b0]">字</span></Rb></Set>
        </div>
      </Group>

      <Group title="段落" className="w-[244px]">
        <div className={topRow}>
          <Set className="w-[99px] shrink-0">
            <Rb label="项目符号"><Lines d="M6 3.500h9M6 8.500h9M6 13.500h9"><path d="M1 3.500h2M1 8.500h2M1 13.500h2" stroke="#2c62b8" strokeWidth="2" /></Lines></Rb><Down />
            <Rb label="编号"><Lines d="M6 3.500h9M6 8.500h9M6 13.500h9"><path d="M2 1v3M1 7h2v3M1 12h2v3" stroke="#2c62b8" /></Lines></Rb><Down />
            <Rb label="多级列表"><Lines d="M4 3.500h11M8 8.500h7M12 13.500h4"><path d="M1.500 1v3M5 7v3M9 12v3" stroke="#2c62b8" /></Lines></Rb><Down />
          </Set>
          <Set className="w-[45px] shrink-0">
            <Rb label="减少缩进"><Lines d="M8 2.500h8M8 5.500h5M8 8.500h8M8 11.500h5M5 14.500h11"><path d="M1 7h5M4 4L1 7l3 3" stroke="#2c62b8" /></Lines></Rb>
            <Rb label="增加缩进"><Lines d="M8 2.500h8M8 5.500h5M8 8.500h8M8 11.500h5M5 14.500h11"><path d="M1 7h5M3 4l3 3-3 3" stroke="#2c62b8" /></Lines></Rb>
          </Set>
          <Set className="w-8 shrink-0"><Rb label="中文版式"><Lines d="M2 14l7-9 7 9M4 11h10"><path d="M1 3h5M3 1L1 3l2 2M12 3h5M15 1l2 2-2 2" stroke="#1a1a90" /></Lines></Rb><Down /></Set>
          <Set className="w-6"><Rb label="排序" className="text-[10px] leading-[9px]"><span className={serifB}><span className="block text-[#2c62b8]">A</span><span className="block text-[#b03030]">Z</span></span><svg width="8" height="16" fill="none" stroke="#111"><path d="M4 1v13M1 11l3 4 3-4" /></svg></Rb></Set>
          <Set className="w-6"><Rb label="编辑标记"><Lines d="M14 2v4H8M11 3L8 6l3 3M6 7v7M3 11h6" /></Rb></Set>
        </div>
        <div className="flex h-[26px] items-center gap-[3px] pl-[3px] pr-1">
          <Set className="w-[117px] shrink-0">
            <Rb label="左对齐"><Lines d="M2 2.500h14M2 5.500h9M2 8.500h14M2 11.500h9" /></Rb>
            <Rb label="居中"><Lines d="M2 2.500h14M5 5.500h8M2 8.500h14M5 11.500h8" /></Rb>
            <Rb label="右对齐"><Lines d="M2 2.500h14M7 5.500h9M2 8.500h14M7 11.500h9" /></Rb>
            <Rb label="两端对齐" className="bg-linear-to-b from-[#f5a040] to-[#fbd478]"><Lines d="M2 2.500h14M2 5.500h14M2 8.500h14M2 11.500h14" /></Rb>
            <Rb label="分散对齐"><Lines d="M3 5.500h12M3 8.500h12M3 11.500h12M3 14.500h12M1.500 1v14M16.500 1v14"><path d="M3 2.500h12" stroke="#2c62b8" /></Lines></Rb>
          </Set>
          <Set className="w-8 shrink-0"><Rb label="行距"><Lines d="M8 3.500h8M8 7.500h8M8 11.500h8"><path d="M3 1v13M1 4l2-3 2 3M1 11l2 3 2-3" stroke="#2c62b8" /></Lines></Rb><Down /></Set>
          <Set className="w-[67px] shrink-0">
            <Rb label="底纹"><svg width="18" height="16"><path d="M5 6l5-4 5 5-6 4zM1 12h15v3H1z" fill="#e4e4e4" stroke="#8c8c8c" /></svg></Rb><Down dim />
            <Rb label="边框"><svg width="15" height="15" fill="none" stroke="#333" strokeDasharray="1 1"><path d="M1.500 1v13M7.500 1v13M13.500 1v13M1 1.500h13M1 7.500h13" /><path d="M1 13.500h13" strokeDasharray="none" /></svg></Rb><Down />
          </Set>
        </div>
      </Group>

      <Group title="样式" className="min-w-0 flex-1 pr-px" corner={false}>
        <div className="flex pt-1 pl-1">
          <div className="flex h-[60px] shrink-0 gap-2 border border-[#b9cfe9] bg-[#dce8f6] pt-1 pl-1">
            {[['AaBbC', '标题', 'text-[21px]'], ['AaBl', '标题 1', 'text-[26px]'], ['AaBbC', '标题 2', 'text-[21px]']].map(([sample, name, size]) => (
              <button key={name} className="flex h-[50px] w-16 flex-col items-center overflow-hidden bg-white text-xs text-[#000080]">
                <span className={`block h-[31px] w-full overflow-hidden whitespace-nowrap pl-[2px] text-left leading-8 text-black ${serifB} ${size}`}>{sample}</span>
                <span className="leading-[18px]">{name}</span>
              </button>
            ))}
            <div className="-mt-1 -ml-1 flex w-[15px] flex-col border-l border-[#b9cfe9]">
              <button aria-label="上一行" className="flex flex-1 items-center justify-center bg-[#eeeeee]"><svg width="6" height="3"><path d="M0 3h6L3 0z" fill="#999" /></svg></button>
              <button aria-label="下一行" className="flex flex-1 items-center justify-center border-y border-[#b9cfe9]"><Down /></button>
              <button aria-label="更多样式" className="flex flex-1 items-center justify-center"><Down /></button>
            </div>
          </div>
          <button className="ml-1 shrink-0 text-xs text-[#15428b]">
            <span className={`block text-right text-[30px] leading-8 italic text-[#b35bc4] ${serifB}`}>A</span>
            <span className="block leading-4">更改</span>
          </button>
        </div>
      </Group>
    </div>
  );
}

const Hl = ({ children, className = '' }) => <span className={`bg-[#ff0] ${className}`}>{children}</span>;
const Ret = () => <span className="font-['DejaVu_Sans',sans-serif] text-[8px] leading-none font-normal text-[#777]">↵</span>;
const wavy = 'underline decoration-[#3a9a3a] decoration-wavy decoration-1 underline-offset-2';

function Document() {
  const c = 'border border-black p-0';
  const cell = (t) => <td key={t} className={`${c} whitespace-nowrap`}><Hl>{t}</Hl><Ret /></td>;
  return (
    <div className="flex min-h-0 flex-1 overflow-hidden bg-linear-to-b from-[#b2cdee] via-[#8fadd9] to-[#5f85b8]">
      <svg className="h-full w-[101px] shrink-0" preserveAspectRatio="none" viewBox="0 0 95 197">
        <path d="M0 125L95 86v12L0 152z" fill="#fff" opacity=".18" />
      </svg>
      <article className="flex-1 overflow-hidden border-l-2 border-black bg-white font-['Noto_Sans_CJK_SC',sans-serif] text-[13px] text-[#222]">
        <div className="h-[6px] overflow-hidden pl-[78px]"><span className="block -mt-3 leading-4">1&nbsp;&nbsp; 孔径公差</span></div>
        <div className="ml-[102px] mr-[78px] h-[220px] border border-black">
          <h3 className="pt-[5px] pl-[169px] text-[15px] font-bold leading-[22px] whitespace-pre text-black"><Hl>表<span className="font-normal">9</span>　孔径公差<span className="inline-block w-[109px]" />单位：<span className="font-['Liberation_Mono',monospace] text-[13px] font-normal">mm</span></Hl><Ret /></h3>
          <table className="mt-[9px] ml-[10px] w-[594px] table-fixed border-collapse border-2 border-black text-center leading-[18px]">
            <colgroup>
              <col className="w-[36px]" />
              <col className="w-[68px]" />
              <col className="w-[90px]" />
              <col className="w-[60px]" />
              <col className="w-[92px]" />
              <col className="w-[86px]" />
              <col className="w-[83px]" />
              <col className="w-[79px]" />
            </colgroup>
            <tbody>
              <tr className="h-[43px] leading-5">
                <td colSpan={2} className={c}><Hl>孔径类型</Hl><Ret /></td>
                <td className={c}><Hl>孔径≤0.31</Hl><Ret /></td>
                <td className={`${c} whitespace-nowrap`}><Hl>0.31＜孔</Hl><br /><Hl>径≤0.8</Hl><Ret /></td>
                <td className={c}><Hl>0.8＜孔径</Hl><br /><Hl>≤1.6</Hl><Ret /></td>
                <td className={c}><Hl>1.6＜孔径</Hl><br /><Hl>≤2.5</Hl><Ret /></td>
                <td className={c}><Hl>2.5＜孔径</Hl><br /><Hl>≤6.0</Hl><Ret /></td>
                <td className={c}><Hl>＞6.0</Hl><Ret /></td>
              </tr>
              <tr className="h-[22px]">
                <td rowSpan={2} className={`${c} leading-5`}><Hl>PTH</Hl><br /><Hl>孔</Hl><Ret /></td>
                <td className={`${c} whitespace-nowrap`}><Hl className={wavy}>非压接孔</Hl><Ret /></td>
                {['+0.05/-∞', '± 0.075', '+0.10/-0.05', '+0.15 /-0.05', '+0.15/-0.05', '+0.3 /-0.05'].map(cell)}
              </tr>
              <tr className="h-[22px]">
                <td className={c}><Hl className={wavy}>压接孔</Hl><Ret /></td>
                {[' ± 0.05', '± 0.05', '± 0.05 ', '± 0.08', ' ± 0.08', '± 0.08 '].map(cell)}
              </tr>
              <tr className="h-[22px]">
                <td colSpan={2} className={c}><Hl>NPTH 孔</Hl><Ret /></td>
                {['± 0.05', ' ± 0.05', '+0.075/-0.05', '+0.10/-0.05', ' +0.10/-0.05', '+0.3 /-0.05'].map(cell)}
              </tr>
            </tbody>
          </table>
          <p className="pl-[43px] text-[15px] leading-[22px]"><Hl>对特殊<span className={wavy}>压接孔的</span>要求见表 10。</Hl><Ret /></p>
          <p className="pt-[2px] pl-[233px] text-[15px] font-bold leading-[22px] text-[#f00]"><Hl>表<span className="font-normal">10</span>　特殊压接孔要求</Hl><Ret /></p>
        </div>
      </article>
      <div className="w-[10px] border-l-2 border-black" />
    </div>
  );
}

function WordWindow() {
  const tabs = ['开始', '插入', '页面布局', '引用', '邮件', '审阅', '视图', '开发工具', '加载项', 'Acrobat'];
  return (
    <section className={`absolute left-[743px] right-0 top-[657px] bottom-[10px] flex flex-col overflow-hidden rounded-tl-md border-l border-t border-[#3b5f94] bg-[#bfdbff] text-xs ${SANS}`}>
      <header className="flex h-7 shrink-0 items-center bg-linear-to-b from-[#e4edf9] to-[#d3e3f8] pl-[50px]">
        <div className="flex h-[21px] items-center gap-[10px] rounded-r-full border border-[#b3cdec] bg-[#d9e7f8] pr-3 pl-1">
          <button aria-label="保存"><svg width="14" height="14"><path d="M.5 .5h13v13H.5z" fill="#3b3fb0" stroke="#1c1f70" /><path d="M3 1h8v6H3z" fill="#fff" /><path d="M4 9h6v4H4z" fill="#b8bde8" /></svg></button>
          <button aria-label="撤销" className="flex items-center"><svg width="14" height="12" fill="none" stroke="#a9b6c8" strokeWidth="2.500"><path d="M3 1v5h5M3 6c3-5 9-4 9 0 0 2-1 4-4 5" /></svg><Down dim /></button>
          <button aria-label="重复"><svg width="14" height="12" fill="none" stroke="#a9b6c8" strokeWidth="2.500"><path d="M3 3c-3 4 1 8 4 8s6-4 3-8M12 1H8v5" /></svg></button>
        </div>
        <svg width="7" height="8" className="ml-2"><path d="M0 .5h6" stroke="#15428b" /><path d="M0 3h6L3 6z" fill="#15428b" /></svg>
        <h1 className="flex-1 pr-10 text-center text-[#6a7480]">20130912205657375 [兼容模式] <span className="pl-1 text-[13px] text-[#3e6aaa]">- Microsoft Word</span></h1>
      </header>
      <nav className="flex h-[27px] shrink-0 items-end gap-px border-b border-[#9dbde6] border-t border-t-[#a9c8ef] pl-[50px] text-[#15428b]">
        {tabs.map((t, i) => (
          <button key={t} className={i === 0 ? 'mr-px h-[25px] rounded-t border border-b-0 border-[#9dbde6] bg-[#e6eff9] px-3' : 'h-[25px] px-[14px] leading-6'}>{t}</button>
        ))}
      </nav>
      <svg width="38" height="38" viewBox="0 0 38 38" className="absolute left-[6px] top-[6px]">
        <circle cx="19" cy="19" r="18" fill="#e9eef6" stroke="#8c9fbd" />
        <circle cx="19" cy="13" r="12" fill="#fff" opacity=".7" />
        <g fill="none" strokeWidth="3">
          <path d="M15 17H9V9h9v5" stroke="#e2501c" />
          <path d="M22 13h5v5h-4" stroke="#3d8be0" />
          <path d="M17 22v5h-7v-5h4" stroke="#f6b41a" />
          <path d="M21 22v6h7v-7h-4" stroke="#6aae2e" />
          <path d="M16 15h6v6h-6z" stroke="#f08a2a" strokeWidth="1.500" />
        </g>
      </svg>
      <Ribbon />
      <Document />
    </section>
  );
}

/* ---------- Taskbar and drawn-over callouts ---------- */

const taskColors = ['#7fb89a', '#e8a33c', '#f0841e', '#7bbf5a', '#2a4fc0', '#8c9fd8', '#3aa8e0', '#4a86c8', '#e03c20', '#20a8a0', '#101080', '#101080', '#101080'];

function Taskbar() {
  return (
    <footer className="relative flex h-[10px] shrink-0 items-start gap-[2px] overflow-hidden border-t border-[#ece9e2] bg-[#d4d0c8] pt-[3px] pl-1 text-[11px]">
      <button className={`flex h-5 w-[45px] items-start gap-1 border-t border-l border-r border-t-white border-l-white border-r-[#404040] pt-px pl-1 font-bold leading-3 ${SANS}`}>
        <svg width="14" height="12" className="shrink-0"><path d="M0 3l6-2v5l-6 1z" fill="#e04020" /><path d="M7 1l6 1v5l-6-1z" fill="#4a9a30" /></svg>
        开始
      </button>
      <span className="mx-[6px] h-5 border-l border-[#808080]" />
      {taskColors.map((color, i) => (
        <button key={i} aria-label={`Task ${i + 1}`} className={i === 5 ? 'h-5 w-[97px] shrink-0 border-2 border-t-[#404040] border-l-[#404040] border-r-white bg-[#eeece8] pl-1' : 'h-5 w-[97px] shrink-0 border-2 border-t-white border-l-white border-r-[#404040] pl-[6px]'}>
          <svg width="14" height="12"><rect width="14" height="12" rx="2" fill={color} /></svg>
        </button>
      ))}
      <span className="mx-2 h-5 border-l border-[#808080]" />
      {['#3b5fc0', '#222222', '#d03020', '#3aa8e0', '#e03c20', '#888888', '#666666'].map((color, i) => (
        <svg key={i} width="12" height="12" className="mx-[6px] shrink-0"><circle cx="6" cy="6" r="5" fill={color} /></svg>
      ))}
    </footer>
  );
}

function Callouts() {
  return (
    <svg className="pointer-events-none absolute inset-0 h-full w-full" fill="none">
      <defs>
        <filter id="lift" x="-10%" y="-10%" width="120%" height="130%">
          <feDropShadow dx="3" dy="3" stdDeviation="2" floodOpacity=".5" />
        </filter>
      </defs>
      <g filter="url(#lift)" strokeWidth="2">
        <path d="M32 222h650v71H32z" stroke="#f00" />
        <path d="M1214 857h94v81h-94z" stroke="#f00" />
        <path d="M943 310h428v38H943zM924 570h408v65H924z" stroke="#ff0" />
        <path d="M1233 870L526 291" stroke="#ff0" />
        <path d="M518 284l16 6-7 8z" fill="#ff0" stroke="#ff0" strokeWidth="1" />
      </g>
    </svg>
  );
}

export default function App() {
  return (
    <div className="relative flex h-screen flex-col overflow-hidden bg-black">
      <EditorHeader />
      <main className="flex min-h-0 flex-1">
        <aside className={`flex w-[155px] shrink-0 flex-col bg-[#52cdae] pb-[2px] ${MONO}`}>
          <div className={`ml-[2px] flex-1 ${greenDown}`} />
          <div className="mt-[2px] mr-[2px] ml-[3px] h-5 border border-black bg-[#ffc64f] pl-[3px] text-xs leading-[18px]">Selected : 0</div>
        </aside>
        <div className="relative min-w-0 flex-1 overflow-hidden">
          <Board />
          <DrillChart />
        </div>
        <Palette />
      </main>
      <StatusBars />
      <Taskbar />
      <DrillToolManager />
      <WordWindow />
      <Callouts />
    </div>
  );
}
